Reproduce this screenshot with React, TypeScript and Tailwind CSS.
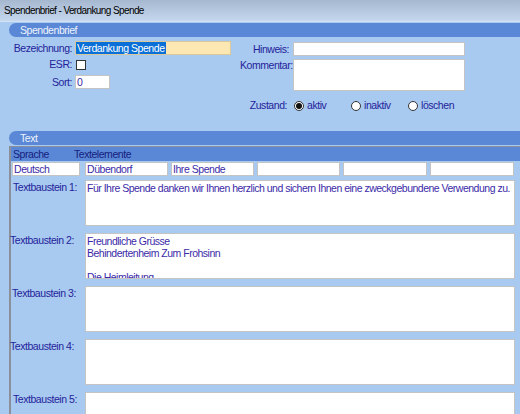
import React from "react";

const font = { fontFamily: '"Liberation Sans", Arial, sans-serif' };

function Radio({ checked, label }: { checked?: boolean; label: string }) {
  return (
    <div className="flex items-center w-[57px]">
      <span className="flex items-center justify-center w-[10px] h-[10px] rounded-full border border-[#333] bg-white">
        {checked && <span className="w-[6px] h-[6px] rounded-full bg-[#111]" />}
      </span>
      <span className="ml-[3px] text-[#24239a]">{label}</span>
    </div>
  );
}

function SectionHeader({ title }: { title: string }) {
  return (
    <div className="h-[14px] rounded-l-[7px] bg-[#5a88d6] pl-[11px] leading-[14px] text-[#eef3fc]">
      {title}
    </div>
  );
}

const blocks = [
  { label: "Textbaustein 1:", ml: "ml-[2px]", text: "Für Ihre Spende danken wir Ihnen herzlich und sichern Ihnen eine zweckgebundene Verwendung zu." },
  { label: "Textbaustein 2:", ml: "ml-[-1px]", text: "Freundliche Grüsse\nBehindertenheim Zum Frohsinn\n\nDie Heimleitung" },
  { label: "Textbaustein 3:", ml: "ml-[1px]", text: "" },
  { label: "Textbaustein 4:", ml: "ml-[-1px]", text: "" },
  { label: "Textbaustein 5:", ml: "ml-[2px]", text: "" },
];

export default function App() {
  return (
    <div
      className="w-[520px] h-[414px] overflow-hidden bg-[#a8c9f0] text-[10.5px] leading-[13px] tracking-[-0.45px] whitespace-nowrap"
      style={font}
    >
      {/* window title */}
      <div className="h-[22px] bg-gradient-to-b from-[#a6b8cf] to-[#c6d8ee] pl-[4px] flex items-center text-[10px] tracking-[-0.6px] text-black border-b border-[#d3e2f4]">
        Spendenbrief - Verdankung Spende
      </div>

      <div className="pl-[9px] pt-[1px]">
        <SectionHeader title="Spendenbrief" />

        <div className="flex -ml-[9px] mt-[4px] text-[#24239a]">
          {/* left column */}
          <div className="w-[240px] flex flex-col">
            <div className="flex items-center h-[14px]">
              <span className="w-[72px] text-right">Bezeichnung:</span>
              <div className="ml-[3px] w-[156px] h-[14px] bg-[#fde7b2] border border-[#d8c89a] flex items-center">
                <span className="bg-[#0a6fd6] text-white px-[1px] leading-[12px]">Verdankung Spende</span>
              </div>
            </div>
            <div className="flex items-center h-[11px] mt-[4px]">
              <span className="w-[72px] text-right">ESR:</span>
              <span className="ml-[4px] w-[10px] h-[10px] bg-white border border-[#333]" />
            </div>
            <div className="flex items-center h-[14px] mt-[5px]">
              <span className="w-[72px] text-right">Sort:</span>
              <div className="ml-[3px] w-[35px] h-[14px] bg-white border border-[#c4c4c4] pl-[1px] text-[#3b2aa8] leading-[12px]">0</div>
            </div>
          </div>

          {/* right column */}
          <div className="flex flex-col">
            <div className="flex items-center h-[14px] mt-[1px]">
              <span className="w-[49px] text-right">Hinweis:</span>
              <div className="ml-[4px] w-[172px] h-[14px] bg-white border border-[#c4c4c4]" />
            </div>
            <div className="flex items-start mt-[3px]">
              <span className="w-[49px] text-right">Kommentar:</span>
              <div className="ml-[4px] w-[172px] h-[32px] bg-white border border-[#c4c4c4]" />
            </div>
            <div className="flex items-center mt-[8px] -ml-[1px]">
              <span className="w-[49px] text-right pr-[1px]">Zustand:</span>
              <div className="ml-[6px] flex">
                <Radio checked label="aktiv" />
                <Radio label="inaktiv" />
                <Radio label="löschen" />
              </div>
            </div>
          </div>
        </div>

        <div className="mt-[19px]">
          <SectionHeader title="Text" />
        </div>

        <div className="mt-[1px] border-l-2 border-t border-[#8a8f99]">
          <div className="h-[14px] bg-[#5a88d6] flex items-center text-[#16207e]">
            <span className="ml-[2px] w-[61px]">Sprache</span>
            <span>Textelemente</span>
          </div>
          <div className="flex mt-[1px] h-[14px]">
            <div className="ml-[1px] w-[68px] bg-white border border-[#c4c4c4] pl-[1px] text-[#3b2aa8] leading-[12px]">Deutsch</div>
            <div className="ml-[5px] w-[83px] bg-white border border-[#c4c4c4] pl-[1px] text-[#3b2aa8] leading-[12px]">Dübendorf</div>
            <div className="ml-[3px] w-[83px] bg-white border border-[#c4c4c4] pl-[1px] text-[#3b2aa8] leading-[12px]">Ihre Spende</div>
            <div className="ml-[3px] w-[83px] bg-white border border-[#c4c4c4]" />
            <div className="ml-[3px] w-[84px] bg-white border border-[#c4c4c4]" />
            <div className="ml-[3px] w-[84px] bg-white border border-[#c4c4c4]" />
          </div>

          <div className="flex flex-col gap-[7px] mt-[4px]">
            {blocks.map((b) => (
              <div key={b.label} className="flex">
                <span className={`${b.ml} w-[72px] mt-[1px] text-[#24239a]`}>{b.label}</span>
                <div className="ml-auto mr-[5px] w-[430px] h-[46px] bg-white border border-[#c4c4c4] pl-[1px] pt-[1px] text-[#3b2aa8] whitespace-pre overflow-hidden leading-[12px] tracking-[-0.5px]">
                  {b.text}
                </div>
              </div>
            ))}
          </div>
        </div>
      </div>
    </div>
  );
}
